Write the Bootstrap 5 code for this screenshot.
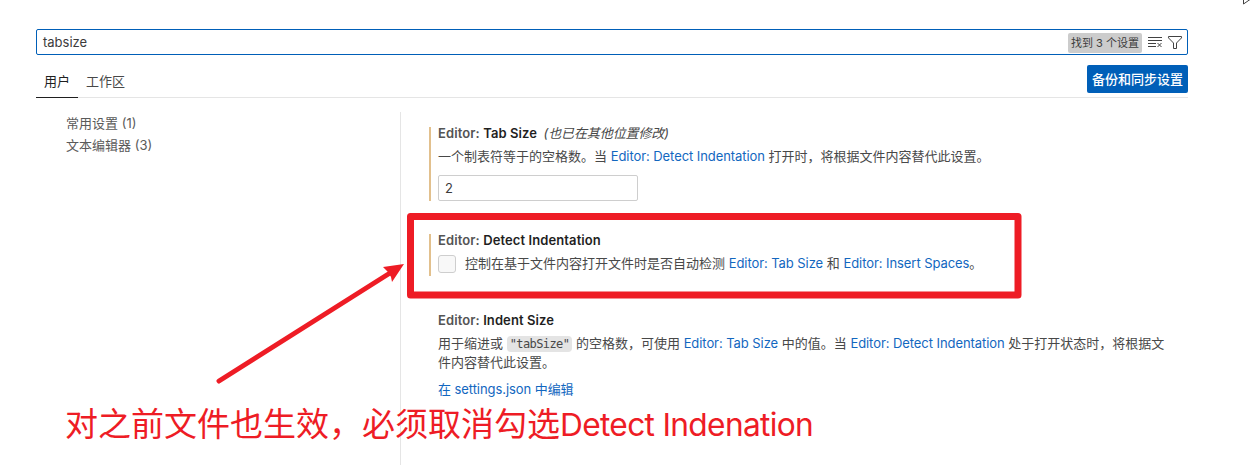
<!DOCTYPE html>
<html lang="zh-CN">
<head>
<meta charset="utf-8">
<meta name="viewport" content="width=device-width, initial-scale=1">
<title>设置</title>
<link href="https://cdn.jsdelivr.net/npm/bootstrap@5.3.0/dist/css/bootstrap.min.css" rel="stylesheet">
<style>
  body { font: 13px/19px Inter, "Noto Sans CJK SC", sans-serif; color: #484848; background: #fff; height: 465px; overflow: hidden; }
  a { color: #1267bf; text-decoration: none; letter-spacing: -.07px; }
  .settings { width: 1152px; margin-left: 36px; padding-top: 29px; height: 465px; }
  .search { height: 26px; border: 1px solid #005fb8; border-radius: 2px; padding: 0 4px 0 6px; color: #3b3b3b; }
  .found { background: #ccc; color: #3b3b3b; font-size: 11px; line-height: 20px; height: 20px; width: 74px; border-radius: 2px; margin-top: 1px; }
  .tabs { height: 42px; border-bottom: 1px solid #e5e5e5; margin-top: 1px; }
  .scope { height: 32px; line-height: 30px; margin-top: 10px; padding: 0 8px; }
  .scope.active { color: #1f1f1f; border-bottom: 1px solid #1f1f1f; width: 42px; }
  .sync { background: #005fb8; color: #fff; font-size: 13px; font-weight: 500; line-height: 28px; height: 28px; width: 101px; padding: 0; border: 0; border-radius: 2px; margin-top: 9px; }
  .toc { width: 364px; padding: 14px 0 0 30px; line-height: 22px; color: #5a5a5a; flex: none; }
  .results { border-left: 1px solid #e5e5e5; margin-top: 14px; padding-left: 28px; height: 353px; }
  .setting { border-left: 2px solid transparent; padding-left: 7px; }
  .modified { border-left-color: #e2c08d; }
  .title { font-weight: 600; line-height: 13px; color: #545454; letter-spacing: .1px; }
  .title b { color: #1f1f1f; font-weight: 600; }
  .title em { font-weight: 400; margin-left: 3px; letter-spacing: -.1px; color: #484848; }
  .about { margin-top: 7px; }
  .field { width: 200px; height: 26px; border: 1px solid #cecece; border-radius: 2px; padding: 3px 6px; line-height: 19px; color: #3b3b3b; margin-top: 9px; }
  .tick { width: 18px; height: 18px; border: 1px solid #cecece; border-radius: 3px; background: #f8f8f8; flex: none; }
  .val { font: 12px/17px "DejaVu Sans Mono", monospace; letter-spacing: -.6px; color: #484848; background: #e4e4e4; border-radius: 4px; padding: 1px 3px; }
  .marks { left: 0; top: 0; pointer-events: none; }
  .remark { left: 65px; top: 402px; font-size: 33px; line-height: 44px; color: #ee1c25; white-space: nowrap; }
  .latin { font-size: 31.7px; letter-spacing: -.68px; }
</style>
<script src="https://cdn.jsdelivr.net/npm/bootstrap@5.3.0/dist/js/bootstrap.bundle.min.js"></script>
</head>
<body class="position-relative">
<main class="settings">
  <div class="search d-flex align-items-center">
    <span class="flex-grow-1">tabsize</span>
    <span class="found text-center">找到 3 个设置</span>
    <svg class="ms-1" width="18" height="16" viewBox="0 0 18 16" fill="none" stroke="#424242"><path d="M2 3.500h14M2 6.500h14M2 9.500h8M2 12.500h8M11.500 9l4 4M15.500 9l-4 4"/></svg>
    <svg style="margin-left:3px" width="16" height="16" viewBox="0 0 16 16" fill="none" stroke="#424242" stroke-linejoin="round"><path d="M1.500 2.500h13v1.400L9.500 9v5.500h-3V9l-5-5.100z"/></svg>
  </div>
  <div class="tabs d-flex">
    <div class="scope active">用户</div>
    <div class="scope">工作区</div>
    <button class="btn sync ms-auto">备份和同步设置</button>
  </div>
  <div class="d-flex">
    <nav class="toc"><div>常用设置 (1)</div><div>文本编辑器 (3)</div></nav>
    <section class="results flex-grow-1">
      <div class="setting modified" style="margin-top:15px;height:74px">
        <div class="title">Editor: <b>Tab Size</b> <em>(也已在其他位置修改)</em></div>
        <div class="about">一个制表符等于的空格数。当 <a href="#">Editor: Detect Indentation</a> 打开时，将根据文件内容替代此设置。</div>
        <div class="field">2</div>
      </div>
      <div class="setting modified" style="margin-top:33px;height:42px">
        <div class="title">Editor: <b>Detect Indentation</b></div>
        <div class="d-flex" style="margin-top:8px"><span class="tick"></span><div style="margin-left:9px;margin-top:-1px">控制在基于文件内容打开文件时是否自动检测 <a href="#">Editor: Tab Size</a> 和 <a href="#">Editor: Insert Spaces</a>。</div></div>
      </div>
      <div class="setting" style="margin-top:38px">
        <div class="title">Editor: <b>Indent Size</b></div>
        <div class="about">用于缩进或 <span class="val">"tabSize"</span> 的空格数，可使用 <a href="#">Editor: Tab Size</a> 中的值。当 <a href="#">Editor: Detect Indentation</a> 处于打开状态时，将根据文<br>件内容替代此设置。</div>
        <div style="margin-top:8px"><a href="#">在 settings.json 中编辑</a></div>
      </div>
    </section>
  </div>
</main>
<svg class="marks position-absolute" width="1257" height="465" viewBox="0 0 1257 465" fill="none">
  <rect x="410.500" y="216.500" width="607.500" height="78.500" stroke="#ee1c25" stroke-width="7" stroke-linejoin="round"/>
  <path d="M219 381L390 273" stroke="#ee1c25" stroke-width="5" stroke-linecap="round"/>
  <path d="M404 264L383 267L388 272L391 277L392 282z" fill="#ee1c25"/>
  <path d="M1243.500 -8V4L1250 -.5" stroke="#424242"/>
</svg>
<div class="remark position-absolute">对之前文件也生效，必须取消勾选<span class="latin">Detect Indenation</span></div>
</body>
</html>
